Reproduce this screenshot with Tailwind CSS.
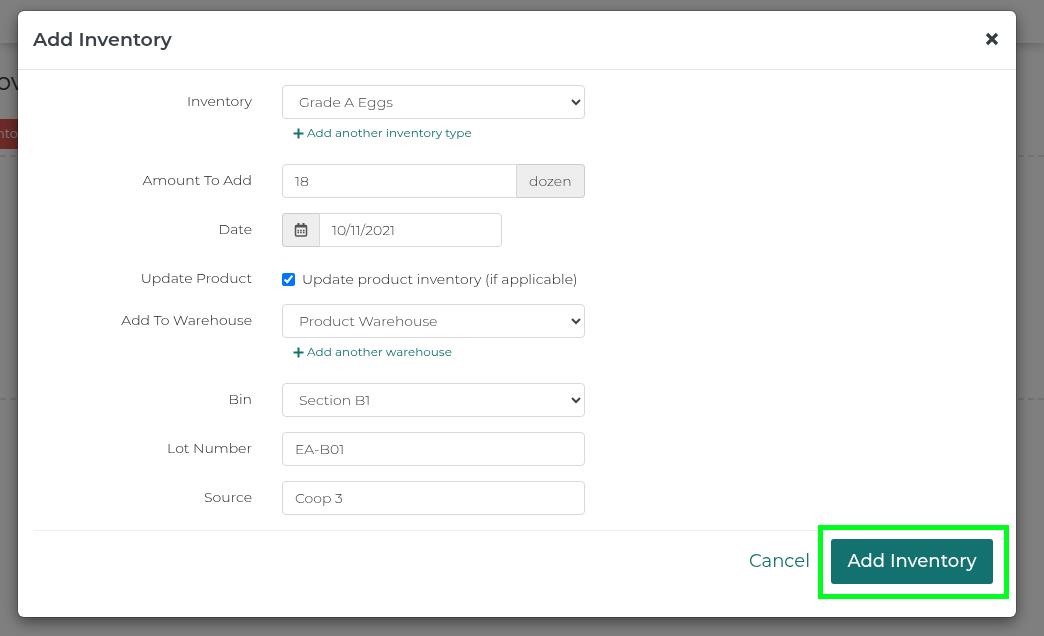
<!doctype html>
<html lang="en">
  <head>
    <meta charset="UTF-8" />
    <meta name="viewport" content="width=device-width, initial-scale=1.0" />
    <title>Add Inventory</title>
    <script src="https://cdn.jsdelivr.net/npm/@tailwindcss/browser@4"></script>
  </head>

  <body
    class="bg-white font-['Montserrat','Inter',sans-serif] text-[14px] leading-5 font-light text-[#222] overflow-hidden"
  >
    <!-- Page behind the modal -->
    <div class="min-h-screen" aria-hidden="true">
      <div class="h-[43px] shadow-[0_2px_10px_rgba(90,105,125,0.4)]"></div>
      <div class="h-[76px] pt-[23px] flex">
        <div class="-ml-1 text-2xl leading-8 font-normal text-[#2f3640]">ov</div>
      </div>
      <div class="w-[18px] h-[30px] bg-[#d9534f] flex items-center justify-end pb-0.5 text-[13px] font-normal text-white">
        <span>nto</span>
      </div>
      <div class="mt-1.5 h-[245px] border-y-2 border-dashed border-[#e4e4e4]"></div>
    </div>

    <!-- Modal -->
    <div class="fixed inset-0 bg-black/50 pt-[11px] pl-[18px] pr-7">
      <div
        role="dialog"
        aria-labelledby="modal-title"
        class="bg-white rounded-md shadow-[0_0_0_1px_rgba(0,0,0,0.2),0_5px_15px_rgba(0,0,0,0.5)]"
      >
        <div class="flex items-center justify-between h-[59px] px-[15px] border-b border-[#e5e5e5]">
          <h4 id="modal-title" class="text-[19px] font-semibold text-[#3b4148]">Add Inventory</h4>
          <button type="button" aria-label="Close" class="mr-px pb-0.5 text-[#343b42]">
            <svg class="w-4 h-4" viewBox="0 0 16 16" fill="none" stroke="currentColor" stroke-width="3.200">
              <path d="M3 3l10 10M13 3L3 13" />
            </svg>
          </button>
        </div>

        <form class="pt-[15px]">
          <div class="flex flex-col gap-[15px]">
            <div class="flex">
              <label for="inventory" class="w-[249px] px-[15px] pt-1.5 text-right">Inventory</label>
              <div class="w-1/3 px-[15px]">
                <select id="inventory" class="block w-full h-[34px] px-3 bg-white border border-[#d9d9d9] rounded text-[#444]">
                  <option>Grade A Eggs</option>
                </select>
                <a href="#" class="flex items-center h-[30px] pb-0.5 pl-[11px] gap-[3px] text-[12px] font-normal text-[#13716f]">
                  <svg class="w-[11px] h-[11px]" viewBox="0 0 11 11" fill="none" stroke="currentColor" stroke-width="2">
                    <path d="M5.500 0.500v10M0.500 5.500h10" />
                  </svg>
                  Add another inventory type
                </a>
              </div>
            </div>

            <div class="flex">
              <label for="amount" class="w-[249px] px-[15px] pt-1.5 text-right">Amount To Add</label>
              <div class="w-1/3 px-[15px] flex">
                <input id="amount" type="text" value="18" class="flex-1 min-w-0 h-[34px] px-3 border border-[#d9d9d9] rounded-l text-[#444]" />
                <span class="flex items-center px-3 bg-[#eee] border border-l-0 border-[#ccc] rounded-r text-[#444]">dozen</span>
              </div>
            </div>

            <div class="flex">
              <label for="date" class="w-[249px] px-[15px] pt-1.5 text-right">Date</label>
              <div class="w-1/3 px-[15px] flex">
                <span class="flex items-center justify-center w-[37px] bg-[#eee] border border-r-0 border-[#ccc] rounded-l text-[#555]">
                  <svg class="w-[14px] h-[14px]" viewBox="0 0 14 14" fill="none" stroke="currentColor">
                    <rect x="1.500" y="2.500" width="11" height="10.500" rx="1" stroke-width="1.500" />
                    <path d="M1 3.500h12M4.500 0v3M9.500 0v3" stroke-width="2" />
                    <path d="M3.500 7.500h7M3.500 9.500h7" stroke-width="1.300" stroke-dasharray="1.600 1.100" />
                  </svg>
                </span>
                <input id="date" type="text" value="10/11/2021" class="w-[183px] h-[34px] px-3 border border-[#d9d9d9] rounded-r text-[#444]" />
              </div>
            </div>

            <div class="flex">
              <div class="w-[249px] px-[15px] pt-1.5 pb-px text-right">Update Product</div>
              <div class="flex-1 px-[15px] pt-[7px]">
                <label class="flex items-center gap-[7px]">
                  <input type="checkbox" checked class="w-[13px] h-[13px]" />
                  Update product inventory (if applicable)
                </label>
              </div>
            </div>

            <div class="flex">
              <label for="warehouse" class="w-[249px] px-[15px] pt-1.5 text-right">Add To Warehouse</label>
              <div class="w-1/3 px-[15px]">
                <select id="warehouse" class="block w-full h-[34px] px-3 bg-white border border-[#d9d9d9] rounded text-[#444]">
                  <option>Product Warehouse</option>
                </select>
                <a href="#" class="flex items-center h-[30px] pb-0.5 pl-[11px] gap-[3px] text-[12px] font-normal text-[#13716f]">
                  <svg class="w-[11px] h-[11px]" viewBox="0 0 11 11" fill="none" stroke="currentColor" stroke-width="2">
                    <path d="M5.500 0.500v10M0.500 5.500h10" />
                  </svg>
                  Add another warehouse
                </a>
              </div>
            </div>

            <div class="flex">
              <label for="bin" class="w-[249px] px-[15px] pt-1.5 text-right">Bin</label>
              <div class="w-1/3 px-[15px]">
                <select id="bin" class="block w-full h-[34px] px-3 bg-white border border-[#d9d9d9] rounded text-[#444]">
                  <option>Section B1</option>
                </select>
              </div>
            </div>

            <div class="flex">
              <label for="lot" class="w-[249px] px-[15px] pt-1.5 text-right">Lot Number</label>
              <div class="w-1/3 px-[15px]">
                <input id="lot" type="text" value="EA-B01" class="block w-full h-[34px] px-3 border border-[#d9d9d9] rounded text-[#444]" />
              </div>
            </div>

            <div class="flex">
              <label for="source" class="w-[249px] px-[15px] pt-1.5 text-right">Source</label>
              <div class="w-1/3 px-[15px]">
                <input id="source" type="text" value="Coop 3" class="block w-full h-[34px] px-3 border border-[#d9d9d9] rounded text-[#444]" />
              </div>
            </div>
          </div>

          <div class="flex items-center justify-end gap-[21px] mx-[15px] mt-[15px] pt-2 pr-2 pb-[33px] border-t border-[#eee] text-lg">
            <button type="button" class="pb-0.5 font-normal text-[#13716f]">Cancel</button>
            <div class="relative">
              <button type="submit" class="block w-[162px] h-[45px] pb-0.5 rounded-[3px] bg-[#13716f] text-white font-medium">Add Inventory</button>
              <!-- Highlight frame -->
              <div class="absolute -top-3.5 -bottom-[15px] -left-[13px] -right-4 border-5 border-[#00ff1e] pointer-events-none"></div>
            </div>
          </div>
        </form>
      </div>
    </div>
  </body>
</html>
